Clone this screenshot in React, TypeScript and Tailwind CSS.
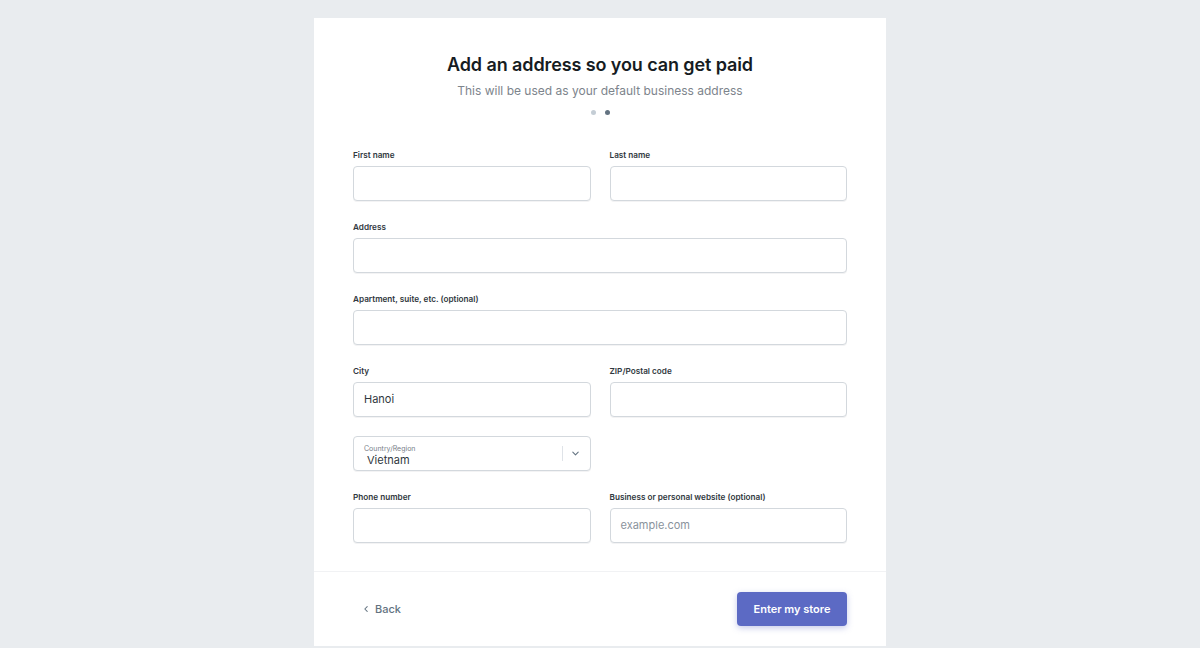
import React from 'react';

const font = { fontFamily: 'Inter, "Noto Sans", sans-serif' };

interface FieldProps {
  label: string;
  value?: string;
  placeholder?: string;
}

const Field: React.FC<FieldProps> = ({ label, value, placeholder }) => (
  <div className="flex flex-col">
    <label className="mb-[5px] h-[11px] text-[8.2px] leading-[11px] font-semibold text-[#303840]">{label}</label>
    <div className="flex h-[35px] items-center rounded-[4px] border border-[#d3d8dd] bg-white px-[10px] shadow-[0_1px_0_rgba(22,29,37,0.05)]">
      {value ? (
        <span className="text-[11px] text-[#303840]">{value}</span>
      ) : placeholder ? (
        <span className="text-[11px] text-[#8a939c]">{placeholder}</span>
      ) : null}
    </div>
  </div>
);

const CountrySelect: React.FC = () => (
  <div className="flex h-[35px] items-center rounded-[4px] border border-[#d3d8dd] bg-white pr-[10px] shadow-[0_1px_0_rgba(22,29,37,0.05)]">
    <div className="flex flex-1 flex-col pl-[10px] pt-[4px]">
      <span className="text-[7px] leading-[9px] text-[#78808a]">Country/Region</span>
      <span className="pl-[3px] text-[11px] leading-[14px] text-[#303840]">Vietnam</span>
    </div>
    <div className="mr-[8px] h-[15px] w-px bg-[#dfe3e8]" />
    <svg width="9" height="9" viewBox="0 0 10 10" fill="none">
      <path d="M2 3.5 L5 6.5 L8 3.5" stroke="#637381" strokeWidth="1.2" strokeLinecap="round" strokeLinejoin="round" />
    </svg>
  </div>
);

export default function App() {
  return (
    <div className="flex h-[648px] w-full justify-center overflow-hidden bg-[#e9ecef] pt-[18px]" style={font}>
      <div className="flex h-[628px] w-[572px] flex-col bg-white">
        <div className="flex flex-col items-center pt-[33px]">
          <h1 className="text-[18px] leading-[28px] font-semibold tracking-[-0.1px] text-[#161c22]">Add an address so you can get paid</h1>
          <p className="mt-[3px] text-[12px] leading-[18px] text-[#7d848c]">This will be used as your default business address</p>
          <div className="mt-[10px] flex gap-[9px]">
            <span className="h-[5px] w-[5px] rounded-full bg-[#c4cdd5]" />
            <span className="h-[5px] w-[5px] rounded-full bg-[#637381]" />
          </div>
        </div>

        <div className="flex flex-1 flex-col px-[39px] pt-[35px]">
          <div className="grid grid-cols-2 gap-x-[19px]">
            <Field label="First name" />
            <Field label="Last name" />
          </div>
          <div className="mt-[21px]">
            <Field label="Address" />
          </div>
          <div className="mt-[21px]">
            <Field label="Apartment, suite, etc. (optional)" />
          </div>
          <div className="mt-[21px] grid grid-cols-2 gap-x-[19px]">
            <Field label="City" value="Hanoi" />
            <Field label="ZIP/Postal code" />
          </div>
          <div className="mt-[19px] grid grid-cols-2 gap-x-[19px]">
            <CountrySelect />
          </div>
          <div className="mt-[21px] grid grid-cols-2 gap-x-[19px]">
            <Field label="Phone number" />
            <Field label="Business or personal website (optional)" placeholder="example.com" />
          </div>
        </div>

        <div className="flex h-[75px] items-center justify-between border-t border-[#f1f2f4] pl-[48px] pr-[39px]">
          <button className="flex items-center gap-[5px] text-[11px] font-medium text-[#637381]">
            <svg width="8" height="8" viewBox="0 0 10 10" fill="none">
              <path d="M6.5 2 L3.5 5 L6.5 8" stroke="#637381" strokeWidth="1.3" strokeLinecap="round" strokeLinejoin="round" />
            </svg>
            Back
          </button>
          <button className="h-[34px] w-[110px] rounded-[4px] bg-[#5c6ac4] text-[11px] font-semibold text-white shadow-[0_2px_6px_rgba(92,106,196,0.35)]">
            Enter my store
          </button>
        </div>
      </div>
    </div>
  );
}
